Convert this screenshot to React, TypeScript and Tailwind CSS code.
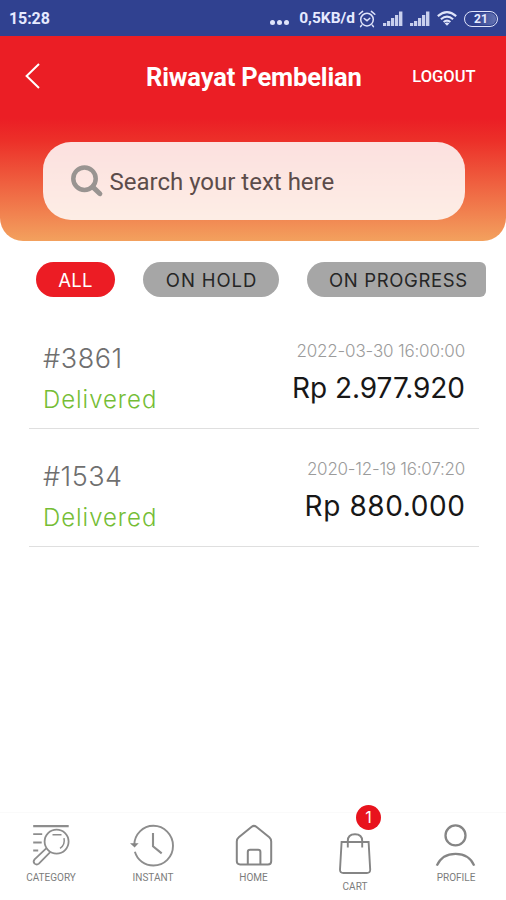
import React from "react";

const orders = [
  {
    id: "#3861", idStyle: "tracking-[0.6px]", date: "2022-03-30 16:00:00", dateStyle: "tracking-[-0.18px]",
    total: "Rp 2.977.920", totalStyle: "tracking-[-0.05px]",
  },
  {
    id: "#1534", idStyle: "tracking-[0.5px]", date: "2020-12-19 16:07:20", dateStyle: "tracking-[-0.24px]",
    total: "Rp 880.000", totalStyle: "-mr-[0.6px] tracking-[0.6px]",
  },
];

function AlarmIcon() {
  return (
    <svg width="18" height="18" viewBox="0 0 18 18" fill="none" stroke="#dfe4fa" strokeWidth="1.5" strokeLinecap="round">
      <circle cx="9" cy="9.6" r="6.3" />
      <path d="M1.2 4.3 4.6 1.4M16.8 4.3 13.4 1.4M3.6 15.2 2.6 16.6M14.4 15.2l1 1.4M6.2 8.5 9 10.7l2.8-2.5" />
    </svg>
  );
}

function SignalIcon() {
  return (
    <svg width="20" height="15" viewBox="0 0 20 15" fill="#c9d0ee">
      <path d="M0 12h3.2v3H0zM4 10h3.2v5H4zM8 7h3.2v8H8zM12 4h3.2v11H12zM16 0.5h3.4V15H16z" />
    </svg>
  );
}

function WifiIcon() {
  return (
    <svg width="20" height="15" viewBox="0 0 20 15" fill="none" stroke="#dfe4fa" strokeWidth="2.1">
      <path d="M.8 5.1Q10-2.8 19.2 5.1M3.9 8.2q6.1-5 12.2 0M6.6 11q3.4-2.6 6.8 0" />
      <path d="M7.6 12.2q2.4-1.3 4.8 0L10 14.8z" fill="#dfe4fa" stroke="none" />
    </svg>
  );
}

function CategoryIcon() {
  return (
    <svg width="40" height="44" viewBox="0 0 40 44" fill="none" stroke="#8d8d8d" strokeWidth="1.8">
      <path d="M2.2 3.2h35.5" strokeWidth="2.2" />
      <path d="M2.2 11.2h9M2.2 19.5h8.5M2.2 27.5h5" />
      <circle cx="25.6" cy="18.6" r="12" />
      <path d="M21.5 11.8h9M33 15.2q1.4 6.8-4 10.2" strokeWidth="1.5" />
      <path d="m15.2 25.4-11.6 11q-1.9 2.3 0 4.2 2.2 1.8 4.3 0L19.2 29.2" />
    </svg>
  );
}

function InstantIcon() {
  return (
    <svg width="46" height="46" viewBox="0 0 46 46" fill="none" stroke="#8d8d8d" strokeWidth="1.9">
      <path d="M4.2 22.2C4.4 11.2 13 2.8 23.4 2.8c10.6 0 19.6 8.7 19.6 19.9S34.3 42.5 23.4 42.5C14.6 42.5 7.3 37 4.9 28.7" />
      <path d="M0 20.2h8.6l-4 4.4z" fill="#858585" stroke="none" />
      <path d="M23 10v13.2l8.7 7.2" strokeWidth="2.1" />
    </svg>
  );
}

function HomeIcon() {
  return (
    <svg width="38" height="44" viewBox="0 0 38 44" fill="none" stroke="#858585" strokeWidth="2" strokeLinejoin="round">
      <path d="M16.7 3.8Q19 2 21.3 3.8L34.3 14.3Q36.2 16.1 36.2 18.5v19.7q0 3.2-3.3 3.2H5.1q-3.3 0-3.3-3.2V18.5q0-2.5 2-4.2z" />
      <path d="M12.8 41.5V29q0-2.3 2.3-2.3h8q2.3 0 2.3 2.3v12.5" />
    </svg>
  );
}

function CartIcon() {
  return (
    <svg width="36" height="44" viewBox="0 0 36 44" fill="none" stroke="#858585" strokeWidth="1.9">
      <path d="M4.6 10h27l1.6 27.6q.1 3.4-3.3 3.4H6.3Q2.9 41 3 37.6z" />
      <path d="M10.8 15.6V9q0-6.7 7.2-6.7t7.2 6.7v6.6" />
    </svg>
  );
}

function ProfileIcon() {
  return (
    <svg width="42" height="44" viewBox="0 0 42 44" fill="none" stroke="#858585" strokeWidth="2.3">
      <circle cx="20.5" cy="12.4" r="10" />
      <path d="M1.8 42.6Q7 30.8 20.6 30.8T39.2 42.6" />
    </svg>
  );
}

function NavItem({ icon, label, style }: { icon: React.ReactNode; label: string; style: string }) {
  return (
    <button className={"flex w-[101px] flex-col items-center font-['Roboto',sans-serif] text-[10px] leading-3 font-normal whitespace-nowrap text-[#7c7c7c] " + style}>
      <span className="h-11">{icon}</span>
      <span className="mt-[5px]">{label}</span>
    </button>
  );
}

export default function App() {
  return (
    <main className="flex h-[900px] w-[506px] flex-col overflow-hidden bg-white font-['Inter',sans-serif]">
      <div className="flex h-9 shrink-0 items-center bg-[#304190] pt-px pr-[8px] pl-[9px] font-['Roboto',sans-serif] text-[#e6eaff]">
        <span className="text-[16px] font-bold tracking-[-0.1px]">15:28</span>
        <span className="mt-[7px] ml-auto flex gap-[2px]">
          <i className="size-[5px] rounded-full bg-[#dfe4fa]" />
          <i className="size-[5px] rounded-full bg-[#dfe4fa]" />
          <i className="size-[5px] rounded-full bg-[#dfe4fa]" />
        </span>
        <span className="mr-[3px] ml-[10px] pt-px text-[15.5px] font-bold">0,5KB/d</span>
        <AlarmIcon />
        <span className="mr-[7px] ml-[7px]"><SignalIcon /></span>
        <SignalIcon />
        <span className="mr-[7px] ml-[7px]"><WifiIcon /></span>
        <span className="flex h-4 w-[34px] items-center justify-center rounded-full border-[1.5px] border-[#dfe4fa] p-[1px] text-[12px] font-bold">
          <span className="flex h-full w-full items-center justify-center rounded-full bg-gradient-to-r from-[#304190] from-30% to-[#6371b0] leading-none">21</span>
        </span>
      </div>

      <header className="flex h-[205px] shrink-0 flex-col rounded-b-[23px] bg-[linear-gradient(to_bottom,#eb1e25_0,#eb1e25_82px,#ec3029_105px,#f3a15e_205px)] px-[42px] font-['Roboto',sans-serif]">
        <div className="flex h-[106px] items-center pb-[24px] text-white">
          <svg className="-mt-[3px] -ml-[18px] shrink-0" width="18" height="28" viewBox="0 0 18 28" fill="none" stroke="#fff" strokeWidth="2">
            <path d="M15 2 2.6 14 15 26" />
          </svg>
          <h1 className="ml-[104px] text-[25.5px] font-bold tracking-[-0.15px] whitespace-nowrap">Riwayat Pembelian</h1>
          <button className="-mr-[11.5px] ml-auto text-[16.5px] font-medium">LOGOUT</button>
        </div>
        <label className="mr-[-0.5px] ml-[0.5px] flex h-[78px] items-center rounded-[28px] bg-white/85 pt-[2px] pl-7">
          <svg width="34" height="34" viewBox="0 0 34 34" fill="none" stroke="#999491">
            <circle cx="13.5" cy="13.7" r="11.2" strokeWidth="4.5" />
            <path d="m21.7 21.9 7.2 6.8" strokeWidth="5" strokeLinecap="round" />
          </svg>
          <span className="ml-[5px] text-[24px] text-[#5c4c4a]">Search your text here</span>
        </label>
      </header>

      <nav className="mt-[21px] ml-9 flex h-[35px] w-[450px] shrink-0 gap-7 overflow-hidden rounded-r-[6px] text-[18.5px] whitespace-nowrap text-[#252525]">
        <button className="w-[79px] shrink-0 rounded-full bg-[#ec1c24] pt-[2px] tracking-[0.3px] text-white">ALL</button>
        <button className="w-[136px] shrink-0 rounded-full bg-[#a6a6a6] pt-[2px] pl-px tracking-[0.9px]">ON HOLD</button>
        <button className="w-[200px] shrink-0 rounded-full bg-[#a6a6a6] pt-[2px] pl-[22px] text-left tracking-[0.65px]">ON PROGRESS</button>
      </nav>

      <section className="mr-[27px] ml-[29px] mt-[14px] flex flex-col">
        {orders.map((order) => (
          <article key={order.id} className="flex h-[118px] justify-between border-b-[1.5px] border-[#dfdfdf] px-[14px] whitespace-nowrap">
            <div className="flex flex-col pt-[30px]">
              <span className={"text-[27px] leading-9 font-light text-[#6f6f6f] " + order.idStyle}>{order.id}</span>
              <span className="mt-[7px] text-[24px] leading-8 font-light tracking-[0.95px] text-[#75bd35]">Delivered</span>
            </div>
            <div className="flex flex-col items-end pt-[28px]">
              <span className={"text-[17px] leading-6 font-light text-[#9b9b9b] " + order.dateStyle}>{order.date}</span>
              <span className={"mt-[7px] text-[28px] leading-9 text-[#171717] " + order.totalStyle}>{order.total}</span>
            </div>
          </article>
        ))}
      </section>

      <footer className="mt-auto flex h-[88px] shrink-0 items-start border-t border-[#fafafa] pl-[0.5px]">
        <NavItem icon={<CategoryIcon />} label="CATEGORY" style="pt-[10px]" />
        <NavItem icon={<InstantIcon />} label="INSTANT" style="pl-[2px] pt-[10px]" />
        <NavItem icon={<HomeIcon />} label="HOME" style="pl-px pt-[10px]" />
        <div className="relative">
          <NavItem icon={<CartIcon />} label="CART" style="pl-[2px] pt-[19px]" />
          <span className="absolute -top-[8.5px] left-[52.5px] flex size-[25px] items-center justify-center rounded-full bg-[#e8131d] text-[16px] text-white">1</span>
        </div>
        <NavItem icon={<ProfileIcon />} label="PROFILE" style="pl-[2px] pt-[10px]" />
      </footer>
    </main>
  );
}
